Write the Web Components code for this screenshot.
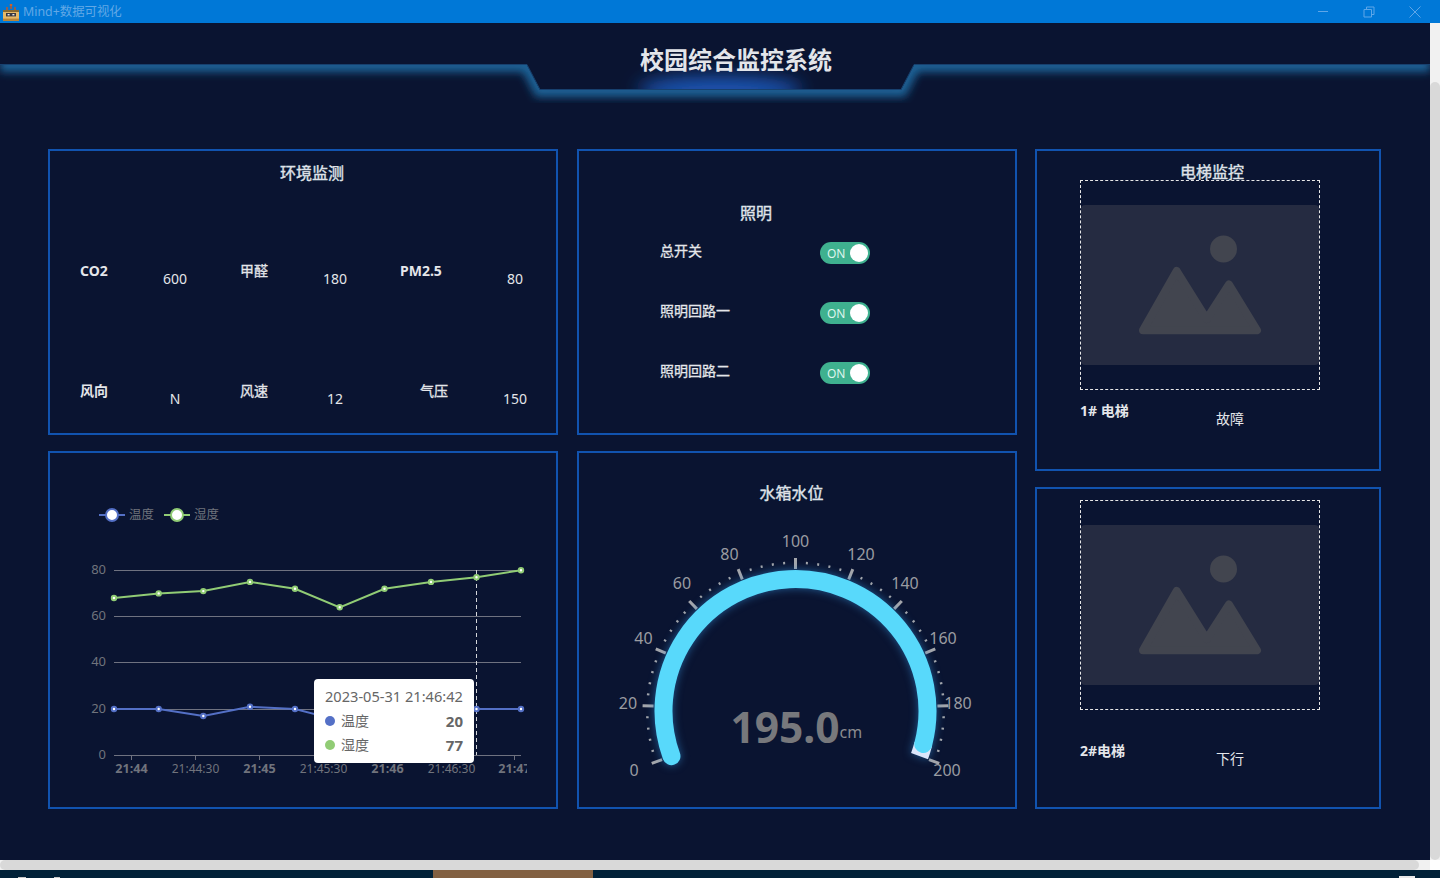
<!DOCTYPE html>
<html lang="zh">
<head>
<meta charset="utf-8">
<title>Mind+数据可视化</title>
<style>
  html, body { margin: 0; height: 100%; overflow: hidden; }
  body {
    display: flex;
    flex-direction: column;
    height: 878px;
    background: #0a1431;
    font-family: "Noto Sans", "Noto Sans CJK SC", sans-serif;
    color: #e4e6ea;
  }
  .middle { display: flex; height: 837px; }
  .grid {
    display: grid;
    grid-template-columns: 511px 440px 346px;
    grid-template-rows: 286px 358px;
    column-gap: 18px;
    row-gap: 16px;
    padding-left: 48px;
  }
  .grid > .left { width: 510px; }
  .right-col {
    grid-column: 3;
    grid-row: 1 / span 2;
    display: flex;
    flex-direction: column;
    gap: 16px;
  }
  .right-col dash-panel { height: 322px; }
  .stats {
    display: grid;
    grid-template-columns: repeat(3, 160px);
    grid-auto-rows: 120px;
    padding-left: 30px;
    margin-top: 77px;
  }
  .wide { --label-width: 75px; }
  .indent { --label-indent: 20px; }
  .light-title { margin-bottom: -1px; }
  .thin { font-weight: normal; -webkit-text-stroke: .3px currentColor; }
</style>
</head>
<body>
<window-bar>Mind+数据可视化</window-bar>
<div class="middle">
  <page-view>
    <dash-header slot="header">校园综合监控系统</dash-header>
    <div class="grid">
      <dash-panel class="left" style="--pad: 11px 0 0 0;">
        <panel-title style="--title-shift: 18px;">环境监测</panel-title>
        <div class="stats">
          <env-stat><span slot="label">CO2</span>600</env-stat>
          <env-stat><span slot="label" class="thin">甲醛</span>180</env-stat>
          <env-stat class="wide"><span slot="label">PM2.5</span>80</env-stat>
          <env-stat><span slot="label">风向</span>N</env-stat>
          <env-stat><span slot="label" class="thin">风速</span>12</env-stat>
          <env-stat class="wide indent"><span slot="label" class="thin">气压</span>150</env-stat>
        </div>
      </dash-panel>
      <dash-panel style="--pad: 51px 0 0 0;">
        <panel-title class="light-title" style="--title-shift: -82px;">照明</panel-title>
        <light-row>总开关</light-row>
        <light-row>照明回路一</light-row>
        <light-row>照明回路二</light-row>
      </dash-panel>
      <div class="right-col">
        <dash-panel style="--pad: 10px 0 0 0;">
          <panel-title style="--title-shift: 8px; margin-bottom: -3px;">电梯监控</panel-title>
          <camera-view style="--status-top: 11px;"><span slot="name">1# 电梯</span>故障</camera-view>
        </dash-panel>
        <dash-panel style="--pad: 11px 0 0 0;">
          <camera-view style="--status-top: 31px;"><span slot="name">2#电梯</span>下行</camera-view>
        </dash-panel>
      </div>
      <dash-panel class="left">
        <trend-chart></trend-chart>
      </dash-panel>
      <dash-panel style="--pad: 29px 0 0 0;">
        <panel-title style="--title-shift: -11px;">水箱水位</panel-title>
        <water-gauge value="195.0" unit="cm"></water-gauge>
      </dash-panel>
    </div>
  </page-view>
  <v-scroll></v-scroll>
</div>
<h-scroll></h-scroll>
<desk-strip></desk-strip>

<script>
(function() {
  // window title bar of the desktop app
  class WindowBar extends HTMLElement {
    constructor() {
      super();
      this.attachShadow({ mode: 'open' }).innerHTML = `
        <style>
        :host {
            display: flex;
            align-items: center;
            height: 23px;
            flex: none;
            background: #0078d7;
            color: #62a8e6;
            font-size: 12.4px;
        }
        .icon { width: 16px; height: 18px; margin-left: 3px; margin-right: 4px; }
        .title { flex: 1; white-space: nowrap; margin-bottom: 1px; }
        .btn { display: flex; justify-content: center; width: 46px; }
        .btn svg { width: 12px; height: 12px; fill: none; stroke: #5ea6e8; stroke-width: 1; }
        </style>
        <svg class="icon" viewBox="0 0 16 18">
          <path d="M8 2v4M4 4v3M12 4v3" stroke="#c8561e" stroke-width="1.4"/>
          <rect x="6.8" y="1" width="2.4" height="2" fill="#d0602a"/>
          <rect x="0" y="7" width="16" height="4" fill="#8a6a30"/>
          <rect x="0" y="9" width="16" height="9" fill="#e6b866"/>
          <rect x="3" y="10" width="10" height="3.4" fill="#3a3a42"/>
          <rect x="4.6" y="11" width="2" height="1.4" fill="#e8e8e8"/>
          <rect x="9.4" y="11" width="2" height="1.4" fill="#e8e8e8"/>
          <rect x="0" y="15.6" width="16" height="2.4" fill="#b98538"/>
        </svg>
        <span class="title"><slot></slot></span>
        <span class="btn"><svg viewBox="0 0 12 12"><path d="M1 5.5h10"/></svg></span>
        <span class="btn"><svg viewBox="0 0 12 12"><path d="M1 3.5h7.5V11H1zM3.5 3.5V1H11v7.5H8.5"/></svg></span>
        <span class="btn" style="margin-right:2px"><svg viewBox="0 0 12 12"><path d="M.5.5l11 11M11.5.5l-11 11"/></svg></span>
      `;
    }
  }
  customElements.define('window-bar', WindowBar);

  class PageView extends HTMLElement {
    constructor() {
      super();
      this.attachShadow({ mode: 'open' }).innerHTML = `
        <style>
        :host { display: block; width: 1430px; flex: none; overflow: hidden; }
        </style>
        <slot name="header"></slot>
        <slot></slot>
      `;
    }
  }
  customElements.define('page-view', PageView);

  // title + the glowing notched line behind it
  class DashHeader extends HTMLElement {
    constructor() {
      super();
      this.attachShadow({ mode: 'open' }).innerHTML = `
        <style>
        :host {
            display: block;
            position: relative;
            height: 126px;
            box-sizing: border-box;
            padding: 21px 0 0 42px;
            text-align: center;
            font-size: 24px;
            font-weight: bold;
            line-height: 32px;
            color: #e3e5ea;
        }
        svg { position: absolute; left: 0; top: 0; }
        span { position: relative; }
        </style>
        <svg width="1430" height="126" viewBox="0 23 1430 126">
          <defs>
            <clipPath id="under"><path d="M0 65H527L540 90H901L914 65H1430V130H0Z"/></clipPath>
            <clipPath id="over"><rect x="560" y="60" width="320" height="30"/></clipPath>
            <filter id="soft" x="-5%" y="-50%" width="110%" height="200%"><feGaussianBlur stdDeviation="4"/></filter>
            <filter id="softer" x="-30%" y="-100%" width="160%" height="300%"><feGaussianBlur stdDeviation="9"/></filter>
          </defs>
          <g clip-path="url(#over)">
            <ellipse cx="720" cy="90" rx="82" ry="14" fill="#1b55b4" filter="url(#softer)"/>
          </g>
          <g clip-path="url(#under)">
            <path d="M0 65H527L540 90H901L914 65H1430" fill="none" stroke="#1a6296" stroke-width="14" filter="url(#soft)"/>
          </g>
          <path d="M0 64.5H527L540 89.5H901L914 64.5H1430" fill="none" stroke="#17406e" stroke-width="1"/>
        </svg>
        <span><slot></slot></span>
      `;
    }
  }
  customElements.define('dash-header', DashHeader);

  class DashPanel extends HTMLElement {
    constructor() {
      super();
      this.attachShadow({ mode: 'open' }).innerHTML = `
        <style>
        :host {
            display: block;
            box-sizing: border-box;
            border: 2px solid #1153af;
            padding: var(--pad, 0);
            overflow: hidden;
        }
        </style>
        <slot></slot>
      `;
    }
  }
  customElements.define('dash-panel', DashPanel);

  class PanelTitle extends HTMLElement {
    constructor() {
      super();
      this.attachShadow({ mode: 'open' }).innerHTML = `
        <style>
        :host {
            display: block;
            position: relative;
            z-index: 1;
            height: 22px;
            line-height: 22px;
            font-size: 16px;
            -webkit-text-stroke: .4px currentColor;
            text-align: center;
            color: #dfe2e8;
        }
        span { display: inline-block; transform: translateX(calc(var(--title-shift, 0px) / 2)); }
        </style>
        <span><slot></slot></span>
      `;
    }
  }
  customElements.define('panel-title', PanelTitle);

  class EnvStat extends HTMLElement {
    constructor() {
      super();
      this.attachShadow({ mode: 'open' }).innerHTML = `
        <style>
        :host { display: flex; align-items: flex-start; font-size: 14px; line-height: 20px; }
        .label {
            box-sizing: border-box;
            width: var(--label-width, 55px);
            padding-left: var(--label-indent, 0);
            font-weight: bold;
            white-space: nowrap;
        }
        .value { width: 80px; margin-top: 8px; text-align: center; }
        </style>
        <span class="label"><slot name="label"></slot></span>
        <span class="value"><slot></slot></span>
      `;
    }
  }
  customElements.define('env-stat', EnvStat);

  class ToggleSwitch extends HTMLElement {
    constructor() {
      super();
      this.attachShadow({ mode: 'open' }).innerHTML = `
        <style>
        :host {
            display: flex;
            align-items: center;
            justify-content: space-between;
            box-sizing: border-box;
            width: 50px;
            height: 22px;
            padding: 0 2px 0 7px;
            border-radius: 11px;
            background: #3fb18f;
            color: #dcf5ec;
            font-size: 12px;
            font-weight: normal;
            -webkit-text-stroke: 0;
        }
        i { width: 18px; height: 18px; border-radius: 50%; background: #fff; }
        </style>
        <span>ON</span><i></i>
      `;
    }
  }
  customElements.define('toggle-switch', ToggleSwitch);

  class LightRow extends HTMLElement {
    constructor() {
      super();
      this.attachShadow({ mode: 'open' }).innerHTML = `
        <style>
        :host {
            display: flex;
            align-items: center;
            height: 60px;
            padding-left: 81px;
            font-size: 14px;
        }
        span {
            width: 160px;
            margin-bottom: 6px;
            white-space: nowrap;
            -webkit-text-stroke: .3px currentColor;
        }
        </style>
        <span><slot></slot></span>
        <toggle-switch></toggle-switch>
      `;
    }
  }
  customElements.define('light-row', LightRow);

  class CameraView extends HTMLElement {
    constructor() {
      super();
      this.attachShadow({ mode: 'open' }).innerHTML = `
        <style>
        :host { display: block; padding-left: 43px; font-size: 14px; line-height: 20px; }
        .frame {
            display: flex;
            align-items: center;
            box-sizing: border-box;
            width: 240px;
            height: 210px;
            border: 1px dashed #e8e8e8;
        }
        svg { display: block; }
        .row { display: flex; align-items: flex-start; margin-top: var(--status-top, 11px); }
        .name { width: 136px; font-size: 14px; font-weight: bold; white-space: nowrap; }
        .state { margin-top: 8px; }
        </style>
        <div class="frame">
          <svg width="238" height="160" viewBox="1081 205 238 160">
            <rect x="1081" y="205" width="238" height="160" rx="4" fill="#252b41"/>
            <circle cx="1223.5" cy="249" r="13.5" fill="#42454f"/>
            <path d="M1143 330.3L1176.7 271L1206.7 319L1229 284.5L1257 330.3Z" fill="#42454f" stroke="#42454f" stroke-width="8" stroke-linejoin="round"/>
          </svg>
        </div>
        <div class="row">
          <span class="name"><slot name="name"></slot></span>
          <span class="state"><slot></slot></span>
        </div>
      `;
    }
  }
  customElements.define('camera-view', CameraView);

  // tooltip laid over the trend chart
  class ChartTooltip extends HTMLElement {
    constructor() {
      super();
      this.attachShadow({ mode: 'open' }).innerHTML = `
        <style>
        :host {
            display: block;
            position: absolute;
            left: 264px;
            top: 226px;
            width: 160px;
            height: 84px;
            box-sizing: border-box;
            padding: 6px 11px;
            border-radius: 4px;
            background: #fff;
            color: #666;
            font-size: 14px;
            line-height: 24px;
            white-space: nowrap;
        }
        .head { font-size: 14.6px; margin-top: -1px; margin-bottom: 1px; }
        .row { display: flex; align-items: center; }
        i { width: 10px; height: 10px; border-radius: 50%; margin-right: 6px; }
        b { margin-left: auto; color: #666; font-size: 15px; }
        </style>
        <div class="head">2023-05-31 21:46:42</div>
        <div class="row"><i style="background:#5470c6"></i>温度<b>20</b></div>
        <div class="row"><i style="background:#91cc75"></i>湿度<b>77</b></div>
      `;
    }
  }
  customElements.define('chart-tooltip', ChartTooltip);

  class TrendChart extends HTMLElement {
    constructor() {
      super();
      const xs = [114, 158.7, 203.3, 250, 295, 339.7, 384.5, 431, 476.5, 521];
      const green = [68, 70, 71, 75, 72, 64, 72, 75, 77, 80];
      const blue = [20, 20, 17, 21, 20, 15, 18, 19, 20, 20];
      const y = v => 755.3 - v * 2.3125;
      const line = (vals, color) => {
        const pts = vals.map((v, i) => `${xs[i]},${y(v).toFixed(1)}`).join(' ');
        const dots = vals.map((v, i) =>
          `<circle cx="${xs[i]}" cy="${y(v).toFixed(1)}" r="2.2" fill="#fff" stroke="${color}" stroke-width="2"/>`).join('');
        return `<polyline points="${pts}" fill="none" stroke="${color}" stroke-width="2"/>${dots}`;
      };
      const grid = [80, 60, 40, 20, 0].map(v => {
        const gy = Math.floor(y(v)) + 0.5;
        return `<line x1="114" x2="521" y1="${gy}" y2="${gy}" stroke="#6f7280"/>
          <text class="ax" x="106" y="${gy - 1.5}" text-anchor="end">${v}</text>`;
      }).join('');
      const times = ['21:44', '21:44:30', '21:45', '21:45:30', '21:46', '21:46:30', '21:47'];
      const ticks = times.map((t, i) => {
        const tx = Math.floor(131.5 + i * 63.9) + 0.5;
        const cls = t.length === 5 ? 'tm bold' : 'tm';
        return `<line x1="${tx}" x2="${tx}" y1="755" y2="760" stroke="#6f7280"/>
          <text class="${cls}" x="${tx}" y="768" text-anchor="middle">${t}</text>`;
      }).join('');
      this.attachShadow({ mode: 'open' }).innerHTML = `
        <style>
        :host { display: block; position: relative; height: 354px; }
        svg { display: block; }
        text { dominant-baseline: central; }
        .ax { font-size: 13px; fill: #70737c; }
        .tm { font-size: 12px; fill: #70737c; }
        .bold { font-size: 12.6px; font-weight: bold; }
        .lg { font-size: 12.4px; fill: #70737c; }
        </style>
        <svg width="506" height="354" viewBox="50 453 506 354">
          <defs><clipPath id="c"><rect x="50" y="453" width="477" height="354"/></clipPath></defs>
          <path d="M99 515h26" stroke="#5470c6" stroke-width="2"/>
          <circle cx="112" cy="515" r="6" fill="#fff" stroke="#5470c6" stroke-width="2"/>
          <text class="lg" x="129" y="514">温度</text>
          <path d="M164 515h26" stroke="#91cc75" stroke-width="2"/>
          <circle cx="177" cy="515" r="6" fill="#fff" stroke="#91cc75" stroke-width="2"/>
          <text class="lg" x="194" y="514">湿度</text>
          ${grid}
          <g clip-path="url(#c)">${ticks}</g>
          <line x1="476.5" x2="476.5" y1="570" y2="755" stroke="#d4d6da" stroke-dasharray="4 3"/>
          ${line(blue, '#5470c6')}
          ${line(green, '#91cc75')}
        </svg>
        <chart-tooltip></chart-tooltip>
      `;
    }
  }
  customElements.define('trend-chart', TrendChart);

  class WaterGauge extends HTMLElement {
    constructor() {
      super();
      const cx = 795.5, cy = 711;
      const pt = (r, deg) => {
        const a = deg * Math.PI / 180;
        return [(cx + r * Math.cos(a)).toFixed(2), (cy - r * Math.sin(a)).toFixed(2)];
      };
      const arc = (r, from, to) => {
        const [x1, y1] = pt(r, from), [x2, y2] = pt(r, to);
        return `M${x1} ${y1}A${r} ${r} 0 ${from - to > 180 ? 1 : 0} 1 ${x2} ${y2}`;
      };
      let ticks = '';
      for (let i = 0; i <= 50; i++) {
        const deg = 200 - i * 4.4;
        const major = i % 5 === 0;
        const [x1, y1] = pt(major ? 142 : 147, deg), [x2, y2] = pt(major ? 153 : 149.5, deg);
        ticks += `<line x1="${x1}" y1="${y1}" x2="${x2}" y2="${y2}" stroke="#a4a6ab" stroke-width="${major ? 3 : 2}"/>`;
      }
      const labels = [[634, 770, 0], [628, 703, 20], [643.5, 638, 40], [682, 583, 60], [729.5, 554, 80],
        [795.5, 541, 100], [861, 554, 120], [905, 583, 140], [943, 638, 160], [958, 703, 180], [947, 770, 200]];
      const labelText = labels.map(l => `<text class="lb" x="${l[0]}" y="${l[1]}">${l[2]}</text>`).join('');
      const value = this.getAttribute('value'), unit = this.getAttribute('unit');
      const end = 200 - parseFloat(value) / 200 * 220;
      this.attachShadow({ mode: 'open' }).innerHTML = `
        <style>
        :host { display: block; height: 303px; }
        svg { display: block; }
        text { dominant-baseline: central; text-anchor: middle; }
        .lb { font-size: 16px; fill: #9a9ca1; }
        .val { font-size: 42.5px; font-weight: bold; fill: #77787c; }
        .unit { font-size: 16px; fill: #8a8b8f; text-anchor: start; }
        .glow { filter: drop-shadow(0 0 4px rgba(50, 140, 215, .6)); }
        </style>
        <svg width="436" height="303" viewBox="579 504 436 303">
          ${ticks}
          <g class="glow">
            <path d="${arc(132, end, -20)}" fill="none" stroke="#dbe6fb" stroke-width="18"/>
            <path d="${arc(132, 200, end)}" fill="none" stroke="#58d9fb" stroke-width="18" stroke-linecap="round"/>
          </g>
          ${labelText}
          <text class="val" x="785" y="726">${value}</text>
          <text class="unit" x="839.5" y="732">${unit}</text>
        </svg>
      `;
    }
  }
  customElements.define('water-gauge', WaterGauge);

  class VScroll extends HTMLElement {
    constructor() {
      super();
      this.attachShadow({ mode: 'open' }).innerHTML = `
        <style>
        :host { display: flex; flex-direction: column; width: 10px; flex: none; background: #f1f1f1; padding-top: 59px; box-sizing: border-box; }
        i { flex: 1; background: #d9d9d9; border-radius: 5px; }
        </style>
        <i></i>
      `;
    }
  }
  customElements.define('v-scroll', VScroll);

  class HScroll extends HTMLElement {
    constructor() {
      super();
      this.attachShadow({ mode: 'open' }).innerHTML = `
        <style>
        :host { display: flex; height: 10px; flex: none; background: #f1f1f1; }
        i { width: 1419px; background: #d9d9d9; border-radius: 5px; }
        b { margin-left: auto; width: 10px; background: #fff; }
        </style>
        <i></i><b></b>
      `;
    }
  }
  customElements.define('h-scroll', HScroll);

  // sliver of the desktop that shows under the window
  class DeskStrip extends HTMLElement {
    constructor() {
      super();
      this.attachShadow({ mode: 'open' }).innerHTML = `
        <style>
        :host { display: block; position: relative; height: 8px; flex: none; background: #012138; }
        i { position: absolute; background: #826042; left: 433px; width: 160px; top: 0; bottom: 0; }
        u { position: absolute; bottom: 0; height: 1px; background: #c8c8c8; }
        </style>
        <i></i>
        <u style="left:18px;width:8px"></u>
        <u style="left:54px;width:6px"></u>
        <u style="left:1399px;width:16px;height:2px;background:#e8e8e8"></u>
      `;
    }
  }
  customElements.define('desk-strip', DeskStrip);
})();
</script>
</body>
</html>
